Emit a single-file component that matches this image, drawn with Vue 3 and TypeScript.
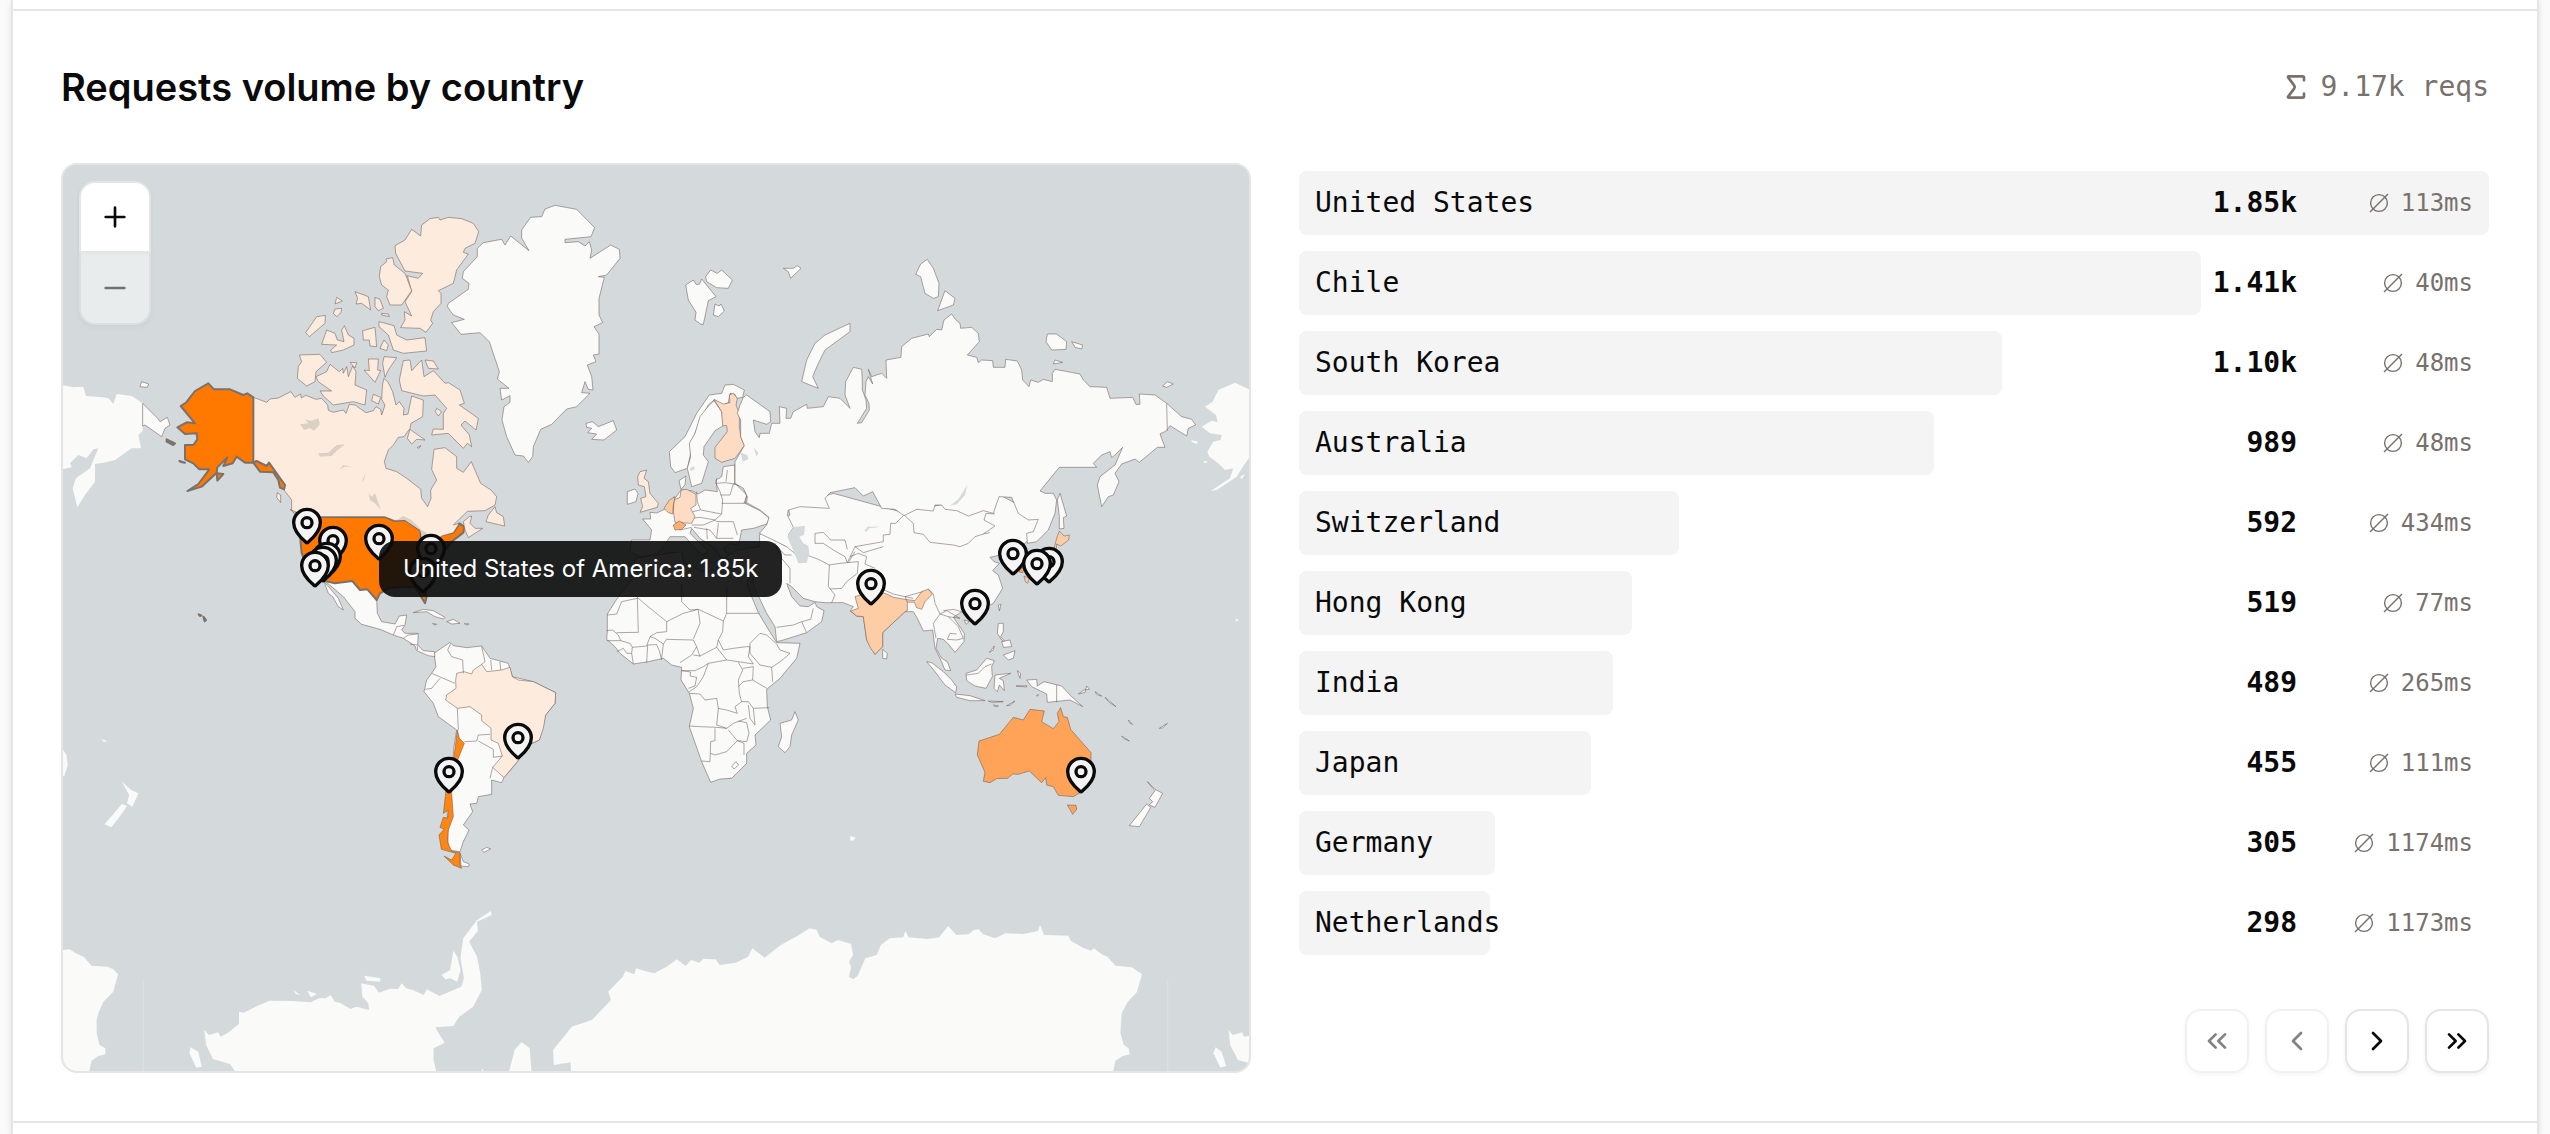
<script setup lang="ts">
import { ref, computed } from 'vue'

interface Shape { k: string; p: string }
interface Sheet { x: number; y: number; sx: number; sy: number; shapes: Shape[]; lines?: string[] }
interface Country { name: string; count: number; latency: number }

const rows: Country[] = [
  { name: 'United States', count: 1854, latency: 113 },
  { name: 'Chile', count: 1405, latency: 40 },
  { name: 'South Korea', count: 1096, latency: 48 },
  { name: 'Australia', count: 989, latency: 48 },
  { name: 'Switzerland', count: 592, latency: 434 },
  { name: 'Hong Kong', count: 519, latency: 77 },
  { name: 'India', count: 489, latency: 265 },
  { name: 'Japan', count: 455, latency: 111 },
  { name: 'Germany', count: 305, latency: 1174 },
  { name: 'Netherlands', count: 298, latency: 1173 },
]
const max = computed(() => Math.max(...rows.map((r) => r.count)))
const page = ref(0)
const format = (n: number): string => (n >= 1000 ? (Math.round(n / 10 + 0.01) / 100).toFixed(2) + 'k' : String(n))

// Map sheets: each holds outlines in its own local units, placed on the world view.
const sheets: Sheet[] = [
  {
    // Antarctica, west
    x: 50, y: 740, sx: 2.529, sy: 3,
    shapes: [
      { k: 'base', p: '30,630 50,628 65,640 85,650 105,677 145,680 160,688 172,703 160,755 135,785 122,820 118,840 118,880 125,915 140,925 140,943 122,948 105,962 98,1000 30,1000' },
      { k: 'base', p: '472,1000 455,972 412,957 395,915 390,870 402,885 425,877 432,890 450,878 478,852 478,815 490,818 520,800 555,782 610,783 660,787 680,775 697,775 710,765 720,785 733,788 760,807 775,800 807,810 805,790 790,770 787,730 820,738 832,758 860,746 880,747 890,730 900,745 918,750 945,765 953,748 985,768 1040,740 1047,715 1038,655 1045,595 1080,540 1115,513 1117,525 1080,545 1082,572 1060,605 1080,650 1088,700 1092,750 1070,800 1035,830 1020,858 975,862 982,878 998,908 970,925 970,960 978,1000' },
      { k: 'base', p: '990,705 1012,690 1020,632 1030,650 1038,690 1030,725 1012,715 1000,718' },
      { k: 'base', p: '795,707 835,715 835,725 800,722' },
      { k: 'base', p: '355,922 375,935 384,980 370,983 353,940' },
      { k: 'base', p: '1160,1000 1175,930 1193,906 1213,925 1218,1000' },
      { k: 'base', p: '615,750 633,765 622,762' },
      { k: 'base', p: '650,752 675,762 660,772' },
      { k: 'base', p: '182,125 205,150 224,160 208,200 195,190 200,165' },
      { k: 'base', p: '182,192 195,198 170,240 155,262 138,253' },
      { k: 'base', p: '30,25 42,45 45,75 36,108 30,108' },
      { k: 'base', p: '130,-4 145,4 136,6' },
      { k: 'base', p: '1092,993 1093,986 1097,993' },
      { k: 'faint', p: '235,718 237,718 237,1000 235,1000' },
    ],
  },
  {
    // Antarctica, east
    x: 640, y: 740, sx: 2.45, sy: 3,
    shapes: [
      { k: 'base', p: '-169,1000 -170,967 -211,975 -213,930 -167,860 -118,840 -71,780 -78,755 -42,710 -36,693 -14,703 -10,685 12,693 35,700 65,680 90,658 112,678 125,660 145,668 155,657 185,658 195,675 235,668 265,650 275,625 305,653 345,615 390,585 415,565 433,570 440,590 470,610 485,600 517,612 522,645 512,665 517,680 512,710 522,718 533,708 552,655 580,645 590,615 612,595 645,592 650,573 658,592 705,597 733,592 755,558 775,585 805,583 818,570 830,568 840,582 870,595 895,580 940,582 975,573 980,555 990,585 1050,587 1055,602 1085,623 1105,632 1112,625 1130,642 1145,650 1165,677 1205,682 1230,703 1217,757 1195,785 1180,820 1177,880 1185,915 1197,925 1200,943 1182,948 1165,962 1158,1000' },
      { k: 'base', p: '1442,870 1452,885 1475,877 1480,890 1500,885 1500,972 1465,960 1446,915' },
      { k: 'base', p: '1410,922 1425,935 1436,978 1422,983 1405,940' },
      { k: 'base', p: '516,288 528,293 522,303 514,300' },
      { k: 'faint', p: '1292,718 1294,718 1294,1000 1292,1000' },
    ],
  },
  {
    // Europe and Latin America
    x: 280, y: 480, sx: 3, sy: 3,
    shapes: [
      { k: 'land', p: '1088,117 1112,117 1110,97 1130,99 1160,85 1185,55 1203,30 1235,32 1255,42 1275,30 1312,35 1308,0 1325,-10 1330,-40 1365,-45 1365,10 1400,45 1395,70 1440,92 1468,115 1460,132 1420,145 1385,150 1378,185 1370,195 1350,190 1330,205 1345,230 1325,235 1305,205 1260,175 1235,145 1230,160 1260,190 1285,210 1270,225 1255,215 1215,170 1170,170 1160,185 1130,225 1080,230 1050,215 1055,180 1110,180 1115,150' },
      { k: 'land', p: '510,487 520,497 560,503 605,498 630,535 685,550 697,590 760,605 827,638 825,670 797,705 778,780 745,795 712,845 672,893 665,908 635,900 635,943 595,950 590,970 570,972 578,995 550,1035 567,1050 550,1085 540,1115 505,1110 500,940 515,880 522,800 530,750 475,710 460,670 432,635 440,600 455,580 468,560 462,520' },
      { k: 'land', p: '540,1120 550,1145 568,1152 565,1160 543,1158' },
      { k: 'chile', p: '532,750 538,775 553,790 535,835 520,880 515,940 520,1010 505,1050 502,1085 515,1113 540,1118 540,1155 545,1165 520,1155 492,1128 515,1140 528,1120 484,1108 477,1065 492,1048 480,1042 490,1012 503,1014 505,990 490,1000 497,940 500,880 522,830 527,790' },
      { k: 'pale', p: '527,600 530,580 552,575 575,582 580,570 605,553 620,575 665,570 690,562 697,590 715,600 760,605 827,638 825,670 797,705 790,745 778,780 745,795 712,845 672,893 638,862 667,828 655,790 633,780 633,745 605,722 605,705 570,680 532,685 497,660 500,645 528,625' },
      { k: 'land', p: '605,1110 620,1102 632,1107 612,1117' },
      { k: 'land', p: '135,303 217,303 240,330 262,328 290,360 292,400 305,425 345,432 358,408 380,405 375,435 365,450 375,460 415,460 413,495 430,512 463,515 465,530 445,527 410,512 405,498 370,475 340,465 300,448 245,433 225,415 225,395 190,350' },
      { k: 'land', p: '132,305 150,325 175,355 190,390 175,380 158,350 145,340' },
      { k: 'land', p: '400,398 430,388 460,392 495,412 490,417 465,410 440,395' },
      { k: 'land', p: '500,425 520,418 540,430 515,432' },
      { k: 'land', p: '458,430 470,433 462,435' },
      { k: 'land', p: '553,431 567,432 560,435' },
      { k: 'us', p: '60,111 315,111 345,123 375,120 422,152 422,190 440,200 485,165 520,158 538,130 553,140 550,158 515,185 500,205 465,235 445,265 425,290 440,350 435,370 420,345 405,322 370,320 325,325 300,340 290,360 262,328 240,330 217,303 165,310 135,303 95,290 65,220 62,190 60,150' },
    ],
    lines: [
      '512,490 503,510 515,530 548,540 550,580', '605,500 615,545 605,553', '632,540 635,570', '660,545 662,570',
      '455,580 525,610', '436,628 455,625 480,595', '532,685 535,750', '553,785 590,783 595,765 630,763', '595,783 640,808 640,832 667,828',
      '638,862 630,895', '340,465 350,440 372,436', '370,475 385,465 413,462', '390,492 412,495', '413,510 412,497',
    ],
  },
  {
    // Africa, Middle East and South Asia
    x: 600, y: 440, sx: 3, sy: 3,
    shapes: [
      { k: 'land', p: '22,522 50,478 95,420 105,355 165,345 245,335 250,370 310,395 380,385 425,390 460,395 440,430 455,470 475,518 500,560 530,608 600,610 590,655 540,715 500,748 502,800 512,840 465,885 468,915 440,940 440,970 395,1015 360,1017 332,1027 305,965 268,860 280,805 268,760 243,720 245,682 215,675 190,655 145,665 100,672 60,640 45,620 20,598 22,570' },
      { k: 'land', p: '585,815 595,840 575,885 570,920 555,938 535,920 545,890 540,850 575,840' },
      { k: 'land', p: '462,440 460,410 420,400 380,350 410,330 480,320 478,285 570,225 565,205 700,160 900,215 1200,165 1330,235 1280,305 1262,320 1265,340 1275,370 1262,390 1240,385 1235,355 1225,340 1200,345 1170,352 1182,365 1198,370 1178,392 1195,405 1208,445 1180,490 1120,520 1100,525 1085,515 1060,532 1093,580 1092,605 1065,637 1045,612 1030,598 1013,595 1008,625 1025,655 1042,665 1052,692 1035,690 1020,655 1005,625 998,570 970,573 952,535 940,515 915,515 848,578 848,620 825,643 800,600 790,530 770,528 750,513 760,500 730,488 675,488 645,485 610,475 575,440 560,430 575,470 600,498 625,500 645,487 650,500 672,512 665,545 620,578 550,600 530,605 525,560 500,520' },
      { k: 'india', p: '765,470 790,462 830,452 860,462 880,472 915,478 945,482 965,455 985,447 997,462 975,485 965,508 950,503 943,487 922,486 922,512 915,515 848,578 848,620 825,643 812,625 800,600 790,530 770,528 752,513 775,505' },
      { k: 'land', p: '848,628 862,640 860,657 848,655' },
    ],
    lines: [
      '22,525 50,522 65,485 112,475', '50,578 115,577 112,472', '112,472 130,488 200,545 250,520 295,508', '245,430 245,485 270,510 295,508 370,543 380,520 380,440',
      '380,520 478,520', '370,543 368,575 355,600 370,630 400,625 440,620', '295,510 300,550 280,597', '150,590 170,578 200,575 200,545', '150,590 165,595 190,612 200,598 280,600',
      '20,572 38,570 55,585 62,602 20,602', '62,602 90,610 97,622 140,618 150,590', '50,635 70,625 80,640 95,640 100,672', '95,640 97,622', '140,668 143,615 170,614 178,632 185,660', '190,612 185,655',
      '280,600 290,620 275,645 240,668', '280,645 300,648 350,622 380,660 325,670 310,680 285,692 245,692', '290,620 300,650', '355,600 350,622', '380,660 415,665 460,672 445,650 450,620 440,620',
      '450,640 450,610 480,580 500,585 530,612 540,630 570,640 545,662 515,682 480,675 450,640', '515,682 518,725', '415,667 428,690 415,720 418,760 425,785 405,800 412,820 380,810 355,805 350,775 315,780 300,762 268,760',
      '325,670 310,710 290,740 268,755', '245,692 272,696 270,708 290,712 285,738 265,745', '428,685 460,680 458,720 500,745', '415,740 430,725 458,720', '425,785 445,785 460,805 465,855 450,835 445,795', '460,805 508,803',
      '355,805 350,855 380,865 400,850 440,835', '268,858 300,860 350,862 380,865', '345,865 345,902 332,905 330,965 305,963', '332,940 345,945 380,935 412,902 385,870', '412,902 440,905 447,880 440,848 415,843', '412,902 432,910 432,945', '395,978 408,965 416,975 402,987 395,978',
      '645,310 645,280 670,277 692,300 735,300 742,328', '765,320 850,305 850,285 870,283 872,250 887,250 912,225', '912,225 940,250 942,278 970,283 990,307 1060,315 1080,320 1105,310 1125,290 1150,282 1185,258 1152,240 1158,220 1185,222',
      '620,345 655,358 688,375 685,440 705,465 695,488', '645,310 670,310 700,330 735,350 742,368', '688,375 720,370 742,368 775,365 772,400 740,425 725,445 690,447', '742,368 765,320 790,338 850,320', '750,350 775,340 800,350 795,372 825,385', '765,335 745,368', '852,450 880,462 915,470 950,460 968,455', '922,486 915,470 940,475',
      '1000,462 1005,490 1020,522 1045,530 1080,535 1040,512 1020,522', '1020,522 1000,550 1008,595', '1045,530 1075,560 1090,595 1070,600 1042,598 1050,580 1070,582', '1030,512 1060,508 1085,515', '530,562 580,555 605,545 620,578', '605,545 632,538 640,505', '985,447 1000,462',
      '290,155 292,185 302,210 365,222 368,180 360,155', '278,215 300,210', '350,130 375,128 405,132', '405,75 405,132', '360,155 348,130 350,115', '362,165 390,165 400,132 430,140 440,168 432,190 365,190', '432,190 455,185', '275,235 300,232 345,240 365,222', '275,255 310,255 345,240', '345,240 350,245 400,245 412,285', '282,262 330,270 350,295 355,250', '320,265 322,298', '350,295 400,295', '382,90 378,125', '222,170 220,200 228,245', '228,262 240,270 275,262',
      '540,310 560,320 580,325', '530,318 555,345 575,345', '545,355 570,385 570,430', '525,310 540,345', '1170,278 1150,282',
    ],
  },
  {
    // Greenland, Arctic and northern Europe
    x: 400, y: 160, sx: 3, sy: 3,
    shapes: [
      { k: 'land', p: '465,136 530,148 584,203 573,230 495,238 495,248 535,245 555,258 568,245 575,270 570,295 632,255 658,268 660,295 620,345 595,350 613,352 597,415 597,465 608,488 582,500 597,522 597,582 580,585 588,605 562,615 575,650 579,690 565,688 555,665 545,698 570,700 530,740 500,747 455,793 422,808 400,860 398,890 385,907 370,888 345,885 320,830 306,780 312,740 330,727 330,707 305,720 300,685 327,685 292,657 298,635 268,545 240,518 183,523 155,488 193,478 160,465 142,440 145,430 205,388 207,370 187,355 190,335 232,290 232,265 250,248 305,238 315,255 332,228 387,272 365,235 365,210 392,172 425,170 435,147' },
      { k: 'land', p: '558,790 578,785 595,800 640,782 650,810 612,840 575,838 590,822 563,818 575,805 560,802' },
      { k: 'land', p: '857,375 880,360 888,373 898,373 905,357 948,410 925,422 910,493 903,493 885,480 888,457 865,420' },
      { k: 'land', p: '917,350 932,330 952,340 965,330 997,360 985,385 950,383 920,365' },
      { k: 'land', p: '945,432 957,438 963,432 973,453 955,470 940,465' },
      { k: 'land', p: '1150,325 1180,325 1192,317 1203,325 1172,355 1165,335' },
      { k: 'land', p: '975,675 1000,673 1033,690 1028,712 1010,715 1005,703 990,700 985,728 970,735 942,720 925,735 900,780 885,820 870,850 872,880 862,925 825,938 812,920 808,875 855,830 890,760 928,705 965,700' },
      { k: 'land', p: '942,722 965,755 970,797 945,812 912,860 910,885 925,905 905,970 875,980 862,925 872,890 868,850 885,820 900,770 925,738' },
      { k: 'mid', p: '942,718 970,732 990,728 988,705 1000,700 1012,715 1008,735 1018,760 1018,800 1022,830 1033,857 1005,895 965,907 945,895 945,862 982,815 980,797 968,797 965,755' },
      { k: 'pale', p: '720,935 740,930 732,955 745,965 750,1000 775,1030 772,1042 720,1057 728,1040 722,1015 738,1010 733,980 715,975 713,950' },
      { k: 'land', p: '682,995 705,987 714,1000 708,1025 682,1033' },
      { k: 'land', p: '837,962 858,948 855,975 843,988' },
      { k: 'mid', p: '843,990 860,988 888,1003 888,1035 872,1045 885,1070 875,1090 825,1087 820,1055 822,1020 840,1012' },
      { k: 'dutch', p: '792,1045 808,1020 825,1010 820,1035 818,1062 805,1058' },
      { k: 'swiss', p: '820,1095 838,1083 858,1095 845,1108 825,1110' },
      { k: 'pale', p: '285,1040 290,1058 310,1070 314,1098 258,1085 265,1065' },
      { k: 'pale', p: '208,1070 215,1068 210,1090 225,1105 248,1105 205,1133 195,1110 190,1085' },
      { k: 'water', p: '870,925 882,918 884,928 872,933' },
    ],
  },
  {
    // Siberia and the Russian coast
    x: 800, y: 160, sx: 3, sy: 3,
    shapes: [
      { k: 'land', p: '-170,712 -160,705 -90,755 -88,785 -100,793 -140,780 -135,815 -122,833 -120,820 -92,820 -85,790 -60,790 -62,740 -40,745 -42,775 -28,775 -20,755 20,733 22,745 70,740 85,710 120,715 150,745 135,705 137,665 160,622 185,628 187,660 187,690 198,720 200,745 172,790 185,788 208,750 207,730 195,705 198,665 205,650 218,672 205,628 215,650 245,640 260,655 258,600 303,592 305,560 335,535 385,522 388,530 410,508 425,510 432,480 455,462 468,480 480,490 482,505 515,502 535,520 538,545 502,585 530,592 535,608 545,600 578,602 580,622 615,622 617,598 652,603 665,630 668,660 687,680 692,660 715,667 730,658 757,665 757,640 765,628 840,642 850,660 870,680 920,682 930,715 998,712 1008,733 1020,733 1018,702 1065,705 1100,730 1145,770 1175,778 1187,795 1165,805 1160,828 1110,797 1100,812 1080,822 1095,862 1072,862 1018,907 1005,897 965,912 945,940 957,965 940,1005 925,1010 905,1040 892,975 900,950 945,915 968,862 945,885 935,893 930,875 905,885 880,910 890,922 778,922 720,993 735,1000 760,1000 770,1020 765,1060 745,1110 710,1145 682,1150 680,1120 700,1115 715,1078 685,1080 655,1060 635,1012 597,1010 580,1060 550,1052 505,1068 470,1052 435,1048 425,1035 405,1035 400,1053 350,1048 312,1067 285,1048 245,1045 218,995 190,1008 165,983 90,998 75,1015 88,1045 0,1040 -35,1050 -38,1065 -20,1102 -35,1125 -10,1160 -10,1185 -40,1160 -70,1145 -122,1120 -100,1095 -93,1072 -120,1050 -160,1028 -158,1010 -170,985 -195,970 -195,905 -167,857 -178,830 -178,780 -188,760 -180,735' },
      { k: 'land', p: '150,490 150,515 75,570 55,610 38,650 55,685 5,665 20,600 45,550 75,525' },
      { k: 'land', p: '382,298 400,325 417,370 415,410 400,415 375,400 362,350 347,343 362,312' },
      { k: 'land', p: '435,392 465,415 460,435 413,452' },
      { k: 'land', p: '742,522 770,522 800,545 798,568 755,570 738,545' },
      { k: 'land', p: '815,545 848,555 845,567 825,562' },
      { k: 'land', p: '765,600 788,607 760,612' },
      { k: 'land', p: '1102,665 1120,672 1100,682 1088,678' },
      { k: 'land', p: '780,1000 800,1068 790,1073 792,1105 778,1107 778,1070 772,1020' },
      { k: 'base', p: '1352,690 1305,668 1255,690 1238,725 1215,740 1248,765 1253,787 1235,782 1205,800 1230,820 1265,825 1262,840 1240,845 1222,875 1228,890 1255,910 1275,930 1300,925 1290,955 1232,993 1250,990 1310,950 1330,918 1352,888' },
      { k: 'base', p: '1172,843 1193,847 1190,853' },
      { k: 'base', p: '1210,902 1223,905 1215,910' },
      { k: 'base', p: '1320,950 1335,942 1325,958' },
      { k: 'water', p: '-20,1102 15,1097 12,1125 -2,1130 10,1150 25,1158 28,1180 20,1208 -5,1210 -17,1180 -38,1130' },
      { k: 'water', p: '502,975 495,1005 470,1033 450,1037 475,1018' },
      { k: 'water', p: '193,1112 203,1100 240,1100 225,1103 208,1104 200,1115' },
      { k: 'water', p: '-178,878 -158,885 -155,897 -172,905' },
      { k: 'water', p: '-140,862 -125,878 -130,890' },
    ],
    lines: ['1100,730 1102,812'],
  },
  {
    // East Asia and Oceania
    x: 860, y: 440, sx: 3, sy: 3,
    shapes: [
      { k: 'aus', p: '357,903 418,883 460,832 490,840 510,808 553,813 545,845 580,866 597,845 592,820 602,803 610,830 622,832 632,868 693,938 693,980 665,1055 640,1070 595,1066 580,1040 560,1035 557,1013 545,1028 508,993 475,1003 458,1002 443,1015 410,1016 390,1028 370,1024 375,997 352,945' },
      { k: 'aus', p: '622,1095 648,1096 650,1108 638,1123' },
      { k: 'land', p: '862,1025 885,1048 908,1060 885,1102 868,1095 878,1085 868,1075 885,1052' },
      { k: 'land', p: '860,1092 872,1103 838,1160 808,1157' },
      { k: 'land', p: '200,665 215,668 250,695 275,720 290,740 287,758 255,735 225,695' },
      { k: 'land', p: '285,762 330,767 375,782 330,782 290,772' },
      { k: 'land', p: '318,700 350,690 380,655 403,662 395,680 397,710 378,745 345,738 320,722' },
      { k: 'land', p: '405,705 452,700 418,715 430,722 433,752 418,735 412,755 402,745' },
      { k: 'land', p: '500,720 530,718 532,738 552,725 605,738 635,770 668,800 630,780 562,787 560,762 515,740' },
      { k: 'land', p: '415,550 430,550 430,575 422,590 440,610 425,600 412,580' },
      { k: 'land', p: '430,645 465,632 460,655 445,660' },
      { k: 'land', p: '425,605 450,600 455,620 430,622' },
      { k: 'land', p: '415,495 423,493 418,513' },
      { k: 'land', p: '388,637 403,618 400,630' },
      { k: 'land', p: '472,692 482,700 480,715' },
      { k: 'land', p: '655,762 672,750 688,748 680,738 675,757' },
      { k: 'land', p: '705,755 725,768 712,765' },
      { k: 'land', p: '735,772 768,800 745,785' },
      { k: 'land', p: '440,797 465,783 450,796' },
      { k: 'land', p: '400,795 415,798 405,800' },
      { k: 'land', p: '385,783 430,785 395,787' },
      { k: 'land', p: '468,738 500,737 500,741' },
      { k: 'land', p: '785,888 808,903 792,896' },
      { k: 'land', p: '898,865 922,850 908,864' },
      { k: 'land', p: '805,840 818,853 810,850' },
      { k: 'land', p: '530,765 536,764 532,769' },
      { k: 'land', p: '312,540 328,545 318,553' },
      { k: 'base', p: '1126,538 1134,537 1133,544 1127,544' },
      { k: 'japan', p: '598,273 612,288 628,285 626,300 602,318 590,312 588,350 580,390 520,408 512,400 565,365 583,322 590,295' },
      { k: 'japan', p: '492,408 508,415 503,430 496,425' },
      { k: 'aus', p: '478,375 492,388 488,398 478,396' },
      { k: 'base', p: '993,0 1015,5 1000,8' },
    ],
    lines: ['590,735 590,787', '320,705 355,700 375,680 395,672'],
  },
  {
    // North America and the far side of the date line
    x: 60, y: 160, sx: 3, sy: 3,
    shapes: [
      { k: 'base', p: '5,675 40,682 70,680 78,708 130,712 145,715 160,732 170,702 215,708 248,730 248,812 235,825 243,865 215,865 165,900 130,908 105,912 105,965 75,1005 52,1042 38,985 48,955 90,925 115,865 100,868 80,895 55,885 30,910 35,922 5,928' },
      { k: 'land', p: '248,730 293,775 300,785 322,772 330,795 315,805 305,830 255,795 248,798' },
      { k: 'land', p: '245,665 266,672 262,682 240,680' },
      { k: 'pale', p: '580,712 620,727 630,717 655,714 692,695 705,712 722,702 724,714 737,706 768,718 785,715 803,735 805,751 820,757 850,750 858,760 868,733 885,735 918,758 940,752 948,740 962,748 965,765 975,735 965,718 968,672 972,655 985,668 998,695 1008,735 1018,725 1032,745 1030,765 1044,762 1055,708 1090,720 1088,770 1053,790 1050,805 1032,830 1015,832 1000,855 985,870 973,905 978,925 1010,935 1040,955 1082,987 1085,1015 1103,1040 1113,1015 1112,990 1130,960 1115,928 1122,868 1155,863 1190,890 1190,925 1210,937 1234,905 1262,970 1293,990 1310,1010 1305,1035 1275,1052 1222,1054 1180,1095 1198,1090 1180,1118 1145,1128 1105,1160 1085,1150 1083,1112 1035,1080 1005,1082 975,1070 710,1070 695,1050 695,1020 672,990 675,975 627,908 620,918 585,902 580,908' },
      { k: 'pale', p: '1140,180 1135,172 1110,176 1085,195 1082,228 1055,208 1035,240 1005,257 1007,280 1035,333 1088,340 1075,355 1042,347 1055,395 1035,425 1055,468 1033,455 1035,480 1022,503 1080,505 1098,517 1118,490 1112,480 1120,455 1143,430 1143,400 1135,392 1180,370 1190,330 1225,282 1210,277 1215,265 1245,250 1256,215 1240,190 1205,176 1165,172' },
      { k: 'pale', p: '978,297 998,293 1003,315 1035,340 1055,392 1025,435 990,435 980,410 985,390 965,375 958,350 962,320 980,305' },
      { k: 'pale', p: '885,395 925,410 932,450 905,430 888,432 893,415' },
      { k: 'pale', p: '945,412 960,418 970,445 955,452 945,440' },
      { k: 'pale', p: '965,460 985,462 988,470 965,465' },
      { k: 'pale', p: '830,412 847,423 825,432' },
      { k: 'pale', p: '825,447 845,445 843,458 830,470 820,460' },
      { k: 'pale', p: '770,470 796,466 795,490 748,530 737,518' },
      { k: 'pale', p: '800,510 825,520 832,540 852,545 845,510 853,497 865,525 882,535 882,555 850,570 815,578 812,570 830,555 785,553' },
      { k: 'pale', p: '908,512 945,502 950,560 930,558 928,540 910,540' },
      { k: 'pale', p: '972,540 985,555 980,572 960,565' },
      { k: 'pale', p: '957,485 1002,497 1010,525 1040,540 1095,533 1100,573 1030,580 1000,570 985,525 957,500' },
      { k: 'pale', p: '718,585 780,583 800,607 768,635 765,665 740,678 712,655 715,620 725,605' },
      { k: 'pale', p: '810,613 838,635 848,625 850,640 860,620 865,650 878,618 888,635 885,675 920,690 915,735 880,725 820,735 790,708 780,693 815,693 775,665 768,650 800,635' },
      { k: 'pale', p: '870,607 890,608 885,624' },
      { k: 'pale', p: '925,597 955,597 953,630 962,632 945,667 912,630 928,632' },
      { k: 'pale', p: '972,590 1010,593 985,630 975,652 968,610' },
      { k: 'pale', p: '940,703 962,712 955,732 935,722' },
      { k: 'pale', p: '1030,602 1050,600 1055,632 1085,600 1092,650 1120,632 1155,670 1165,668 1200,690 1213,730 1198,735 1255,775 1248,810 1215,783 1203,795 1228,825 1235,860 1222,850 1210,865 1165,820 1115,825 1120,807 1150,808 1150,760 1160,745 1125,705 1090,708 1025,692 1018,660' },
      { k: 'pale', p: '1095,600 1120,603 1135,627 1105,625' },
      { k: 'pale', p: '1130,745 1145,755 1135,768 1126,755' },
      { k: 'pale', p: '1050,808 1095,840 1070,838 1055,852 1042,835' },
      { k: 'pale', p: '1072,862 1083,857 1076,865' },
      { k: 'pale', p: '652,998 662,1005 662,1028 650,1012' },
      { k: 'pale', p: '690,1048 712,1058 700,1056' },
      { k: 'lake', p: '720,793 745,790 735,778 752,783 775,775 780,793 762,812 750,805 732,810' },
      { k: 'lake', p: '775,880 805,878 830,855 855,853 830,872 815,888 780,890' },
      { k: 'lake', p: '925,1000 935,1010 945,1000 963,1050 945,1030 930,1020' },
      { k: 'lake', p: '838,928 850,915 873,920 855,920' },
      { k: 'lake', p: '905,965 917,940 912,960' },
      { k: 'lake', p: '1010,1080 1030,1068 1055,1080 1085,1110 1100,1118 1092,1155 1080,1110 1035,1080' },
      { k: 'us', p: '445,670 462,688 510,688 550,705 562,700 580,712 580,908 555,908 530,890 518,910 490,918 502,892 472,922 470,938 425,980 382,993 415,972 448,928 418,928 400,910 375,898 375,855 400,855 412,838 410,820 375,822 352,802 380,787 405,790 362,738 378,728 405,693' },
      { k: 'us', p: '580,908 600,935 640,937 655,960 660,983 672,988 675,975 627,908 620,918 590,903' },
      { k: 'us', p: '470,940 490,942 472,962' },
      { k: 'us', p: '320,838 345,850 340,855 320,845' },
      { k: 'us', p: '358,903 375,908 366,907' },
      { k: 'us', p: '416,1363 424,1366 420,1368' },
      { k: 'us', p: '430,1370 438,1380 434,1384' },
    ],
  },
]

const pins: [number, number][] = [
  [307, 523], [379, 539], [333, 541], [431, 549], [423, 572], [327, 557], [323, 561], [315, 566],
  [449, 772], [518, 738], [871, 584], [975, 604], [1013, 554], [1049, 562], [1037, 564], [1081, 772],
]

const view = { x: 63, y: 165, w: 1186, h: 906 }
const hovered = { label: 'United States of America', count: 1854, x: 379, y: 541 }
const tipStyle = {
  left: ((hovered.x - view.x) / view.w) * 100 + '%',
  top: ((hovered.y - view.y) / view.h) * 100 + '%',
}
const place = (s: Sheet): string => `translate(${s.x} ${s.y}) scale(${1 / s.sx} ${1 / s.sy})`
</script>

<template>
  <main class="card">
    <div class="previous"></div>
    <section class="panel">
      <header class="head">
        <h2>Requests volume by country</h2>
        <p class="total">
          <svg class="icon" viewBox="0 0 24 24" aria-hidden="true"><path d="M18 7V5a1 1 0 0 0-1-1H6.5a.5.5 0 0 0-.4.8l4.5 6a2 2 0 0 1 0 2.4l-4.5 6a.5.5 0 0 0 .4.8H17a1 1 0 0 0 1-1v-2" /></svg>
          <span>9.17k reqs</span>
        </p>
      </header>

      <div class="columns">
        <div class="map">
          <svg class="world" :viewBox="`${view.x} ${view.y} ${view.w} ${view.h}`" role="img" aria-label="World map of requests">
            <g v-for="(s, i) in sheets" :key="i" :transform="place(s)">
              <polygon v-for="(shape, j) in s.shapes" :key="j" :class="['shape', shape.k]" :points="shape.p" />
              <polyline v-for="(line, j) in s.lines ?? []" :key="'l' + j" class="border" :points="line" />
            </g>
            <svg v-for="(pin, i) in pins" :key="'p' + i" class="pin" :x="pin[0] - 20" :y="pin[1] - 17" width="40" height="40" viewBox="0 0 24 24">
              <path d="M20 10c0 4.993-5.539 10.193-7.399 11.799a1 1 0 0 1-1.202 0C9.539 20.193 4 14.993 4 10a8 8 0 0 1 16 0" />
              <circle cx="12" cy="10" r="3" />
            </svg>
          </svg>
          <div class="zoom">
            <button type="button" aria-label="Zoom in">
              <svg class="icon" viewBox="0 0 24 24"><path d="M5 12h14M12 5v14" /></svg>
            </button>
            <button type="button" aria-label="Zoom out" disabled>
              <svg class="icon" viewBox="0 0 24 24"><path d="M5 12h14" /></svg>
            </button>
          </div>
          <div class="tip" :style="tipStyle">{{ hovered.label }}: {{ format(hovered.count) }}</div>
        </div>

        <div class="side">
          <ol class="list">
            <li v-for="row in rows" :key="row.name">
              <span class="bar" :style="{ width: (row.count / max) * 100 + '%' }"></span>
              <span class="name">{{ row.name }}</span>
              <strong>{{ format(row.count) }}</strong>
              <span class="latency">
                <svg viewBox="0 0 20 20" aria-label="Average"><circle cx="10" cy="10" r="8.4" /><path d="M1 19 19 1" /></svg>
                <span>{{ row.latency }}ms</span>
              </span>
            </li>
          </ol>
          <nav class="pager" aria-label="Pages">
            <button type="button" aria-label="First page" :disabled="page === 0" @click="page = 0">
              <svg class="icon" viewBox="0 0 24 24"><path d="m11 17-5-5 5-5M18 17l-5-5 5-5" /></svg>
            </button>
            <button type="button" aria-label="Previous page" :disabled="page === 0" @click="page--">
              <svg class="icon" viewBox="0 0 24 24"><path d="m15 18-6-6 6-6" /></svg>
            </button>
            <button type="button" aria-label="Next page" @click="page++">
              <svg class="icon" viewBox="0 0 24 24"><path d="m9 18 6-6-6-6" /></svg>
            </button>
            <button type="button" aria-label="Last page" @click="page++">
              <svg class="icon" viewBox="0 0 24 24"><path d="m6 17 5-5-5-5M13 17l5-5-5-5" /></svg>
            </button>
          </nav>
        </div>
      </div>
    </section>
    <div class="next"></div>
  </main>
</template>

<style>
body {
  background: #fafafa;
}
</style>

<style scoped>
* {
  box-sizing: border-box;
}
.card {
  display: flex;
  flex-direction: column;
  min-height: 100vh;
  margin: 0 11px;
  border: solid #e5e5e5;
  border-width: 0 2px;
  background: #fff;
  box-shadow: 0 2px 6px rgba(0, 0, 0, 0.1);
  color: #0a0a0a;
  font-family: Inter, 'Liberation Sans', sans-serif;
}
.previous {
  height: 11px;
  border-bottom: 2px solid #e5e5e5;
}
.next {
  flex: 1;
  border-top: 2px solid #e5e5e5;
}
.panel {
  padding: 48px;
}
.head {
  display: flex;
  align-items: center;
  justify-content: space-between;
  height: 56px;
  margin-bottom: 48px;
}
h2 {
  margin: 0;
  font-size: 38px;
  font-weight: 600;
  line-height: 56px;
}
.total {
  display: flex;
  align-items: center;
  gap: 8px;
  margin: 0;
  color: #78716c;
  font: 28px/64px 'DejaVu Sans Mono', monospace;
}
.icon {
  width: 32px;
  height: 32px;
  fill: none;
  stroke: currentColor;
  stroke-width: 2;
  stroke-linecap: round;
  stroke-linejoin: round;
}
.columns {
  display: grid;
  grid-template-columns: 1fr 1fr;
  gap: 48px;
}
.map {
  position: relative;
  overflow: hidden;
  border: 2px solid #e5e5e5;
  border-radius: 16px;
  background: #d4dadc;
}
.world {
  display: block;
  width: 100%;
}
.shape,
.border {
  stroke: rgba(100, 80, 78, 0.5);
  stroke-width: 1;
  stroke-linejoin: round;
  vector-effect: non-scaling-stroke;
}
.border {
  fill: none;
}
.base { fill: #fafaf8; stroke: none; }
.faint { fill: #dde2e3; stroke: none; }
.land { fill: #fafaf8; }
.water { fill: #d4dadc; stroke: none; }
.lake { fill: #dbd0c6; stroke: none; }
.pale { fill: #fdebdd; }
.mid { fill: #fddcc3; }
.dutch { fill: #fdc99f; }
.swiss { fill: #ffb06f; }
.india { fill: #fdcda6; }
.japan { fill: #fdcda6; }
.aus { fill: #ffa358; }
.chile { fill: #ff8612; }
.us { fill: #ff7800; stroke: #78716c; stroke-width: 2; }
.pin {
  fill: #f4f4f5;
  stroke: #0a0a0a;
  stroke-width: 2;
  stroke-linecap: round;
  stroke-linejoin: round;
}
.zoom {
  position: absolute;
  top: 16px;
  left: 16px;
  display: flex;
  flex-direction: column;
}
button {
  display: flex;
  align-items: center;
  justify-content: center;
  padding: 0;
  border: 2px solid #e5e5e5;
  background: #fff;
  box-shadow: 0 2px 4px rgba(0, 0, 0, 0.06);
  color: #0a0a0a;
}
button:disabled {
  opacity: 0.5;
}
.zoom button {
  width: 72px;
  height: 72px;
  border-radius: 16px 16px 0 0;
}
.zoom button + button {
  border-top: 0;
  border-radius: 0 0 16px 16px;
}
.tip {
  position: absolute;
  padding: 0 24px;
  border-radius: 16px;
  background: rgba(10, 10, 10, 0.9);
  color: #fff;
  font-size: 24px;
  line-height: 56px;
  white-space: nowrap;
}
.side {
  display: flex;
  flex-direction: column;
  justify-content: space-between;
  gap: 48px;
}
.list {
  display: flex;
  flex-direction: column;
  gap: 16px;
  margin: 0;
  padding: 8px 0 0;
  list-style: none;
  font: 28px/64px 'DejaVu Sans Mono', monospace;
}
li {
  position: relative;
  display: flex;
  align-items: center;
  height: 64px;
  padding: 0 16px;
}
.bar {
  position: absolute;
  inset: 0 auto 0 0;
  border-radius: 8px;
  background: #f4f4f5;
}
.name,
strong,
.latency {
  position: relative;
}
.name {
  flex: 1;
}
.latency {
  display: flex;
  align-items: center;
  justify-content: flex-end;
  gap: 12px;
  width: 176px;
  color: #78716c;
  font-size: 24px;
}
.latency svg {
  width: 20px;
  height: 20px;
  fill: none;
  stroke: currentColor;
  stroke-width: 1.4;
}
.pager {
  display: flex;
  justify-content: flex-end;
  gap: 16px;
}
.pager button {
  width: 64px;
  height: 64px;
  border-radius: 16px;
}
</style>
